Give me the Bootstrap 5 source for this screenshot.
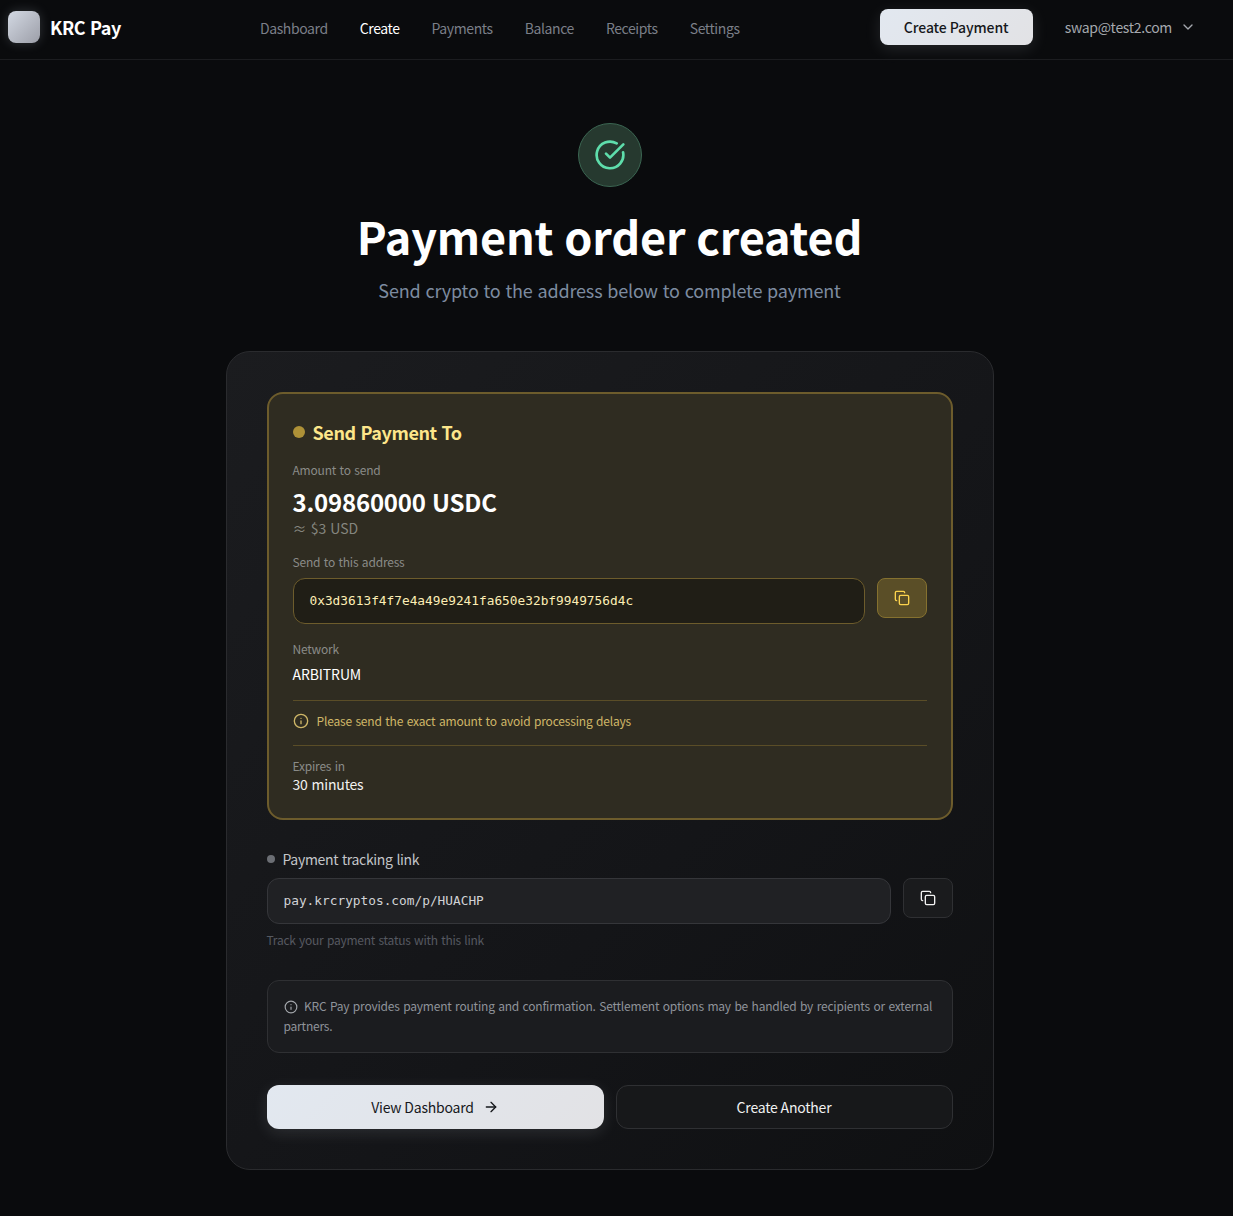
<!DOCTYPE html>
<html lang="en">
<head>
  <meta charset="UTF-8">
  <title>Payment order created | KRC Pay</title>
  <meta name="viewport" content="width=device-width, initial-scale=1">
  <link href="https://cdn.jsdelivr.net/npm/bootstrap@5.3.3/dist/css/bootstrap.min.css" rel="stylesheet">
  <style>
    body {
      background: #0a0b0d;
      font-family: "Noto Sans CJK KR", "Noto Sans", sans-serif;
      min-height: 1216px;
      color: #fff;
      padding-right: 14px;
      word-spacing: 1px;
    }
    svg { display: block; flex-shrink: 0; }
    .topbar {
      height: 60px;
      border-bottom: 1px solid #1c1d20;
      padding: 0 0 5px 8px;
      margin-right: -14px;
    }
    .brand-box {
      width: 32px;
      height: 32px;
      border-radius: 8px;
      background: linear-gradient(135deg, #d3d9e3, #9c9ea8);
      box-shadow: 0 0 12px rgba(200, 210, 225, .2);
    }
    .brand-name {
      margin-left: 10px;
      font-size: 18px;
      font-weight: 700;
      color: #fff;
      letter-spacing: -.4px;
    }
    .nav-items {
      position: absolute;
      left: 260px;
      top: 0;
      height: 56px;
      gap: 32px;
    }
    .nav-items a {
      font-size: 14px;
      color: #7b7f88;
      text-decoration: none;
      letter-spacing: -.4px;
    }
    .nav-items a.on { color: #fff; }
    .btn-light-grad {
      background: linear-gradient(135deg, #e2e8f0, #e2e2e5);
      color: #16181c;
      border: 0;
      box-shadow: 0 4px 16px rgba(226, 232, 240, .12);
    }
    .btn-create {
      width: 153px;
      height: 36px;
      border-radius: 8px;
      font-size: 14px;
      font-weight: 500;
      padding: 0;
      margin-right: 32px;
      letter-spacing: -.1px;
    }
    .user-email {
      font-size: 14px;
      color: #a5a8ae;
      margin-right: 8px;
      letter-spacing: -.3px;
    }
    .user-menu { margin-right: 13px; }
    .hero {
      padding-top: 63px;
      height: 291px;
    }
    .ok-circle {
      width: 64px;
      height: 64px;
      border-radius: 50%;
      background: #26392f;
      border: 1px solid #3b6652;
    }
    .hero h1 {
      font-size: 45px;
      font-weight: 700;
      line-height: 60px;
      margin: 19px 0 0;
      letter-spacing: -.2px;
    }
    .hero p {
      font-size: 18px;
      line-height: 28px;
      margin: 10px 0 0;
      color: #7d8ba0;
      letter-spacing: -.17px;
    }
    .main-panel {
      width: 768px;
      height: 819px;
      margin: 0 auto;
      padding: 40px;
      border: 1px solid #2a2b2e;
      border-radius: 24px;
      background: linear-gradient(135deg, #1b1c1f, #141518 60%, #0f1012);
    }
    .gold-panel {
      height: 428px;
      padding: 24px;
      border: 2px solid #6d5c2c;
      border-radius: 16px;
      background: #2f2c21;
    }
    .dot-gold {
      width: 12px;
      height: 12px;
      border-radius: 50%;
      background: #ae9137;
    }
    .gold-title {
      font-size: 18px;
      line-height: 28px;
      font-weight: 700;
      color: #fde68a;
      margin-left: 8px;
      letter-spacing: -.4px;
    }
    .lbl {
      font-size: 12px;
      line-height: 16px;
      color: #8a8b88;
      letter-spacing: -.2px;
    }
    .amount {
      font-size: 24px;
      line-height: 32px;
      font-weight: 700;
      margin-top: 8px;
      letter-spacing: -.2px;
    }
    .approx {
      font-size: 14px;
      line-height: 20px;
      color: #85867f;
    }
    .addr-row { margin-top: 8px; }
    .addr-box, .link-box {
      height: 46px;
      border-radius: 12px;
      padding: 0 16px;
      font-family: "DejaVu Sans Mono", "Liberation Mono", monospace;
      font-size: 12.8px;
      word-spacing: 0;
      display: flex;
      align-items: center;
    }
    .addr-box {
      background: #201e16;
      border: 1px solid #6d5c2c;
      color: #fdeeb5;
    }
    .link-box {
      background: #202124;
      border: 1px solid #35363a;
      color: #d1d3d6;
    }
    .copy-btn {
      width: 50px;
      height: 40px;
      padding: 0;
      border-radius: 8px;
      display: flex;
      align-items: center;
      justify-content: center;
    }
    .copy-gold { background: #5a4e27; border: 1px solid #85712f; }
    .copy-plain { background: #1a1b1d; border: 1px solid #2f3033; }
    .net-label { margin-top: 17px; }
    .net-name {
      font-size: 14px;
      line-height: 20px;
      color: #fff;
      margin-top: 7px;
      letter-spacing: -.1px;
    }
    .gold-rule { border-top: 1px solid #5a4d27; }
    .warn-line {
      height: 45px;
      margin-top: 16px;
      padding-bottom: 4px;
      font-size: 12px;
      color: #cfb768;
      gap: 8px;
      letter-spacing: -.18px;
    }
    .expire-block { padding-top: 12px; }
    .expire-val {
      font-size: 14px;
      line-height: 20px;
      color: #f2f2f0;
      letter-spacing: -.2px;
    }
    .track-head { margin-top: 29px; }
    .dot-grey {
      width: 8px;
      height: 8px;
      border-radius: 50%;
      background: #6b6e74;
    }
    .track-label {
      font-size: 14px;
      line-height: 20px;
      color: #c3c5c9;
      margin-left: 8px;
      letter-spacing: -.33px;
    }
    .track-row { margin-top: 9px; }
    .track-note {
      font-size: 12px;
      line-height: 16px;
      color: #565961;
      margin-top: 8px;
      letter-spacing: -.25px;
    }
    .note-box {
      margin-top: 32px;
      height: 73px;
      padding: 15px 16px;
      border: 1px solid #2f3033;
      border-radius: 12px;
      background: #1b1c1f;
      font-size: 12px;
      line-height: 20px;
      color: #8f939a;
      letter-spacing: -.2px;
    }
    .note-box svg {
      display: inline-block;
      vertical-align: -3px;
      margin-right: 3px;
    }
    .action-row { margin-top: 32px; gap: 12px; }
    .btn-action {
      flex: 0 0 337px;
      height: 44px;
      border-radius: 12px;
      font-size: 14px;
      padding: 0;
      display: flex;
      align-items: center;
      justify-content: center;
      gap: 9px;
      letter-spacing: -.2px;
    }
    .btn-another {
      background: #17181a;
      border: 1px solid #2f3033;
      color: #f0f0f0;
    }
  </style>
</head>
<body>
  <nav class="topbar d-flex align-items-center position-relative">
    <span class="brand-box"></span>
    <span class="brand-name">KRC Pay</span>
    <div class="nav-items d-flex align-items-center">
      <a href="#">Dashboard</a>
      <a href="#" class="on">Create</a>
      <a href="#">Payments</a>
      <a href="#">Balance</a>
      <a href="#">Receipts</a>
      <a href="#">Settings</a>
    </div>
    <div class="user-menu ms-auto d-flex align-items-center">
      <button class="btn btn-light-grad btn-create">Create Payment</button>
      <span class="user-email">swap@test2.com</span>
      <svg class="me-4" width="16" height="16" viewBox="0 0 24 24" fill="none" stroke="#a5a8ae" stroke-width="2" stroke-linecap="round" stroke-linejoin="round"><path d="m6 9 6 6 6-6"/></svg>
    </div>
  </nav>

  <div class="hero d-flex flex-column align-items-center text-center">
    <div class="ok-circle d-flex align-items-center justify-content-center">
      <svg width="32" height="32" viewBox="0 0 24 24" fill="none" stroke="#5eddab" stroke-width="2" stroke-linecap="round" stroke-linejoin="round"><path d="M21.8 10A10 10 0 1 1 17 3.300"/><path d="m9 11 3 3L22 4"/></svg>
    </div>
    <h1>Payment order created</h1>
    <p>Send crypto to the address below to complete payment</p>
  </div>

  <div class="main-panel">
    <div class="gold-panel">
      <div class="d-flex align-items-center">
        <span class="dot-gold"></span>
        <span class="gold-title">Send Payment To</span>
      </div>
      <div class="lbl mt-3">Amount to send</div>
      <div class="amount">3.09860000 USDC</div>
      <div class="approx">≈ $3 USD</div>
      <div class="lbl mt-3">Send to this address</div>
      <div class="addr-row d-flex align-items-start gap-2">
        <div class="addr-box flex-grow-1 me-1">0x3d3613f4f7e4a49e9241fa650e32bf9949756d4c</div>
        <button class="btn copy-btn copy-gold">
          <svg width="16" height="16" viewBox="0 0 24 24" fill="none" stroke="#fcd34d" stroke-width="2" stroke-linecap="round" stroke-linejoin="round"><rect x="8" y="8" width="14" height="14" rx="2"/><path d="M4 16c-1.100 0-2-.9-2-2V4c0-1.100.9-2 2-2h10c1.100 0 2 .9 2 2"/></svg>
        </button>
      </div>
      <div class="lbl net-label">Network</div>
      <div class="net-name">ARBITRUM</div>
      <div class="gold-rule warn-line d-flex align-items-center">
        <svg width="16" height="16" viewBox="0 0 24 24" fill="none" stroke="#cfb768" stroke-width="2" stroke-linecap="round" stroke-linejoin="round"><circle cx="12" cy="12" r="10"/><path d="M12 16v-4"/><path d="M12 8h.01"/></svg>
        <span>Please send the exact amount to avoid processing delays</span>
      </div>
      <div class="gold-rule expire-block">
        <div class="lbl">Expires in</div>
        <div class="expire-val">30 minutes</div>
      </div>
    </div>

    <div class="track-head d-flex align-items-center">
      <span class="dot-grey"></span>
      <span class="track-label">Payment tracking link</span>
    </div>
    <div class="track-row d-flex align-items-start gap-2">
      <div class="link-box flex-grow-1 me-1">pay.krcryptos.com/p/HUACHP</div>
      <button class="btn copy-btn copy-plain">
        <svg width="16" height="16" viewBox="0 0 24 24" fill="none" stroke="#f2f2f2" stroke-width="2" stroke-linecap="round" stroke-linejoin="round"><rect x="8" y="8" width="14" height="14" rx="2"/><path d="M4 16c-1.100 0-2-.9-2-2V4c0-1.100.9-2 2-2h10c1.100 0 2 .9 2 2"/></svg>
      </button>
    </div>
    <div class="track-note">Track your payment status with this link</div>

    <div class="note-box">
      <svg width="14" height="14" viewBox="0 0 24 24" fill="none" stroke="#a3a6ab" stroke-width="2" stroke-linecap="round" stroke-linejoin="round"><circle cx="12" cy="12" r="10"/><path d="M12 16v-4"/><path d="M12 8h.01"/></svg>
      KRC Pay provides payment routing and confirmation. Settlement options may be handled by recipients or external partners.
    </div>

    <div class="action-row d-flex">
      <button class="btn btn-light-grad btn-action">
        View Dashboard
        <svg width="16" height="16" viewBox="0 0 24 24" fill="none" stroke="#16181c" stroke-width="2" stroke-linecap="round" stroke-linejoin="round"><path d="M5 12h14"/><path d="m12 5 7 7-7 7"/></svg>
      </button>
      <button class="btn btn-another btn-action">Create Another</button>
    </div>
  </div>
</body>
</html>
